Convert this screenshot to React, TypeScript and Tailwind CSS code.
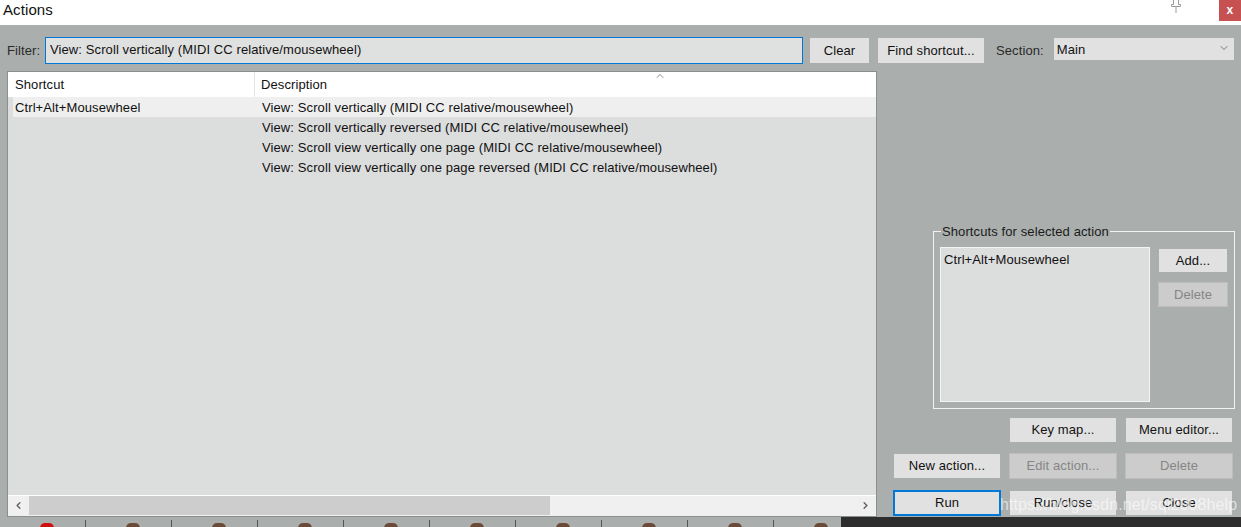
import { ChevronDown, ChevronLeft, ChevronRight, ChevronUp } from "lucide-react";

const rows = [
  { key: "Ctrl+Alt+Mousewheel", desc: "View: Scroll vertically (MIDI CC relative/mousewheel)" },
  { key: "", desc: "View: Scroll vertically reversed (MIDI CC relative/mousewheel)" },
  { key: "", desc: "View: Scroll view vertically one page (MIDI CC relative/mousewheel)" },
  { key: "", desc: "View: Scroll view vertically one page reversed (MIDI CC relative/mousewheel)" },
];

function Btn({ children, disabled = false, className = "" }: { children: React.ReactNode; disabled?: boolean; className?: string }) {
  return (
    <button
      className={
        "flex items-center justify-center text-[13px] " +
        (disabled
          ? "bg-[#cccccc] border border-[#bdbdbd] text-[#858585] "
          : "bg-[#e1e1e1] text-[#111] ") +
        className
      }
    >
      {children}
    </button>
  );
}

function PinIcon() {
  return (
    <svg width="16" height="16" viewBox="0 0 16 16" fill="none" stroke="#9a9a9a" strokeWidth="1">
      <path d="M5.5 0.5h5v6h2v2h-9v-2h2z" fill="#fff" />
      <path d="M8 8.5v6.5" />
    </svg>
  );
}

export default function App() {
  return (
    <div className="w-[1241px] h-[527px] overflow-hidden relative bg-[#aaafad] font-['Liberation_Sans',Arial,sans-serif] text-[13px] tracking-[0.1px] text-[#111]">
      {/* title bar */}
      <div className="h-[25px] bg-white flex items-start">
        <span className="pl-[3px] pt-[1px] text-[15px] leading-[17px] text-[#111]">Actions</span>
        <div className="ml-auto mr-[35px] -mt-[2px]">
          <PinIcon />
        </div>
        <div className="w-[22px] h-[21px] bg-[#c75050] text-white text-[12px] font-bold flex items-center justify-center leading-none pb-[2px]">
          x
        </div>
      </div>

      {/* filter row */}
      <div className="flex items-center pl-[7px] pt-[12px] h-[39px]">
        <span className="text-[#2a2a2a] w-[38px]">Filter:</span>
        <div className="w-[758px] h-[27px] border border-[#0078d7] bg-[#dfe0e0] flex items-center pl-[4px] pb-[2px]">
          View: Scroll vertically (MIDI CC relative/mousewheel)
        </div>
        <Btn className="ml-[7px] w-[59px] h-[25px]">Clear</Btn>
        <Btn className="ml-[9px] w-[106px] h-[25px]">Find shortcut...</Btn>
        <span className="ml-[12px] text-[#2a2a2a]">Section:</span>
        <div className="ml-[10px] w-[180px] h-[22px] -mt-[4px] bg-[#e1e1e1] flex items-start pl-[3px] pt-[2px]">
          <span>Main</span>
          <ChevronDown className="ml-auto mr-[4px] mt-[2px] w-[12px] h-[12px] text-[#555]" strokeWidth={1.5} />
        </div>
      </div>

      {/* body */}
      <div className="flex mt-[7px]">
        {/* action list */}
        <div className="ml-[7px] w-[870px] h-[446px] border border-[#8a8e8d] bg-[#dcdddd] flex flex-col">
          <div className="h-[25px] bg-white flex relative shrink-0">
            <div className="w-[247px] border-r border-[#e5e5e5] pl-[7px] flex items-center">Shortcut</div>
            <div className="pl-[6px] flex items-center">Description</div>
            <ChevronUp className="absolute left-[646px] -top-[2px] w-[12px] h-[12px] text-[#666]" strokeWidth={1.5} />
          </div>
          {rows.map((r, i) => (
            <div key={i} className={"h-[20px] flex items-center shrink-0 pt-[1px] " + (i === 0 ? "bg-[#efefef] ml-[5px]" : "")}>
              <div className={(i === 0 ? "w-[242px] pl-[2px]" : "w-[247px] pl-[7px]") + " truncate"}>{r.key}</div>
              <div className="pl-[7px] whitespace-nowrap">{r.desc}</div>
            </div>
          ))}
          <div className="flex-1" />
          <div className="h-[21px] border-t border-white flex shrink-0 bg-[#f0f0f0] border-b border-b-[#f0f0f0]">
            <div className="w-[21px] flex items-center justify-center">
              <ChevronLeft className="w-[11px] h-[11px] text-[#606060]" strokeWidth={3} />
            </div>
            <div className="w-[521px] bg-[#cdcdcd]" />
            <div className="flex-1" />
            <div className="w-[21px] flex items-center justify-center">
              <ChevronRight className="w-[11px] h-[11px] text-[#606060]" strokeWidth={3} />
            </div>
          </div>
        </div>

        {/* right panel */}
        <div className="flex-1 h-[446px] pl-[16px] flex flex-col justify-end pb-[1px]">
          <fieldset className="ml-[40px] w-[300px] h-[185px] border border-[#f2f2f2] px-[6px] flex">
            <legend className="px-[1px] ml-[1px] text-[#1a1a1a] leading-[15px]">Shortcuts for selected action</legend>
            <div className="flex gap-[8px] mt-[8px]">
              <div className="w-[210px] h-[155px] border border-[#f4f4f4] bg-[#dcdddd] pl-[3px] pt-[2px]">
                Ctrl+Alt+Mousewheel
              </div>
              <div className="flex flex-col gap-[10px] pt-[2px]">
                <Btn className="w-[68px] h-[23px] ml-[1px]">Add...</Btn>
                <Btn disabled className="w-[70px] h-[25px]">Delete</Btn>
              </div>
            </div>
          </fieldset>
          <div className="mt-[9px] grid grid-cols-[106px_106px_106px] gap-x-[10px] gap-y-[12px] ml-[1px]">
            <div />
            <Btn className="h-[24px]">Key map...</Btn>
            <Btn className="h-[24px]">Menu editor...</Btn>
            <Btn className="h-[24px]">New action...</Btn>
            <Btn disabled className="h-[26px] -mt-[1px] -mx-[1px]">Edit action...</Btn>
            <Btn disabled className="h-[26px] -mt-[1px] -mx-[1px]">Delete</Btn>
          </div>
          <div className="mt-[11px] grid grid-cols-[106px_106px_106px] gap-x-[10px] ml-[1px] items-center">
            <Btn className="h-[26px] -mx-[1px] border-2 border-[#0078d7]">Run</Btn>
            <Btn className="h-[24px]">Run/close</Btn>
            <Btn className="h-[24px]">Close</Btn>
          </div>
        </div>
      </div>

      {/* background window strip */}
      <div className="flex h-[10px]">
        <div className="w-[841px] flex pt-[3px]">
          {Array.from({ length: 10 }).map((_, i) => (
            <div key={i} className="w-[86px] shrink-0 flex items-start border-r border-[#555] h-[7px]">
              <div className="w-[40px]" />
              <div className={"w-[14px] h-[10px] rounded-full mt-[3px] " + (i === 0 ? "bg-[#d01010]" : "bg-[#6b4a3a]")} />
            </div>
          ))}
        </div>
        <div className="flex-1 bg-[#2d2d2d]" />
      </div>

      {/* watermark */}
      <div className="absolute left-[1000px] top-[493px] text-[16px] text-white/60 whitespace-nowrap pointer-events-none">
        https://blog.csdn.net/sqi2008help
      </div>
    </div>
  );
}
